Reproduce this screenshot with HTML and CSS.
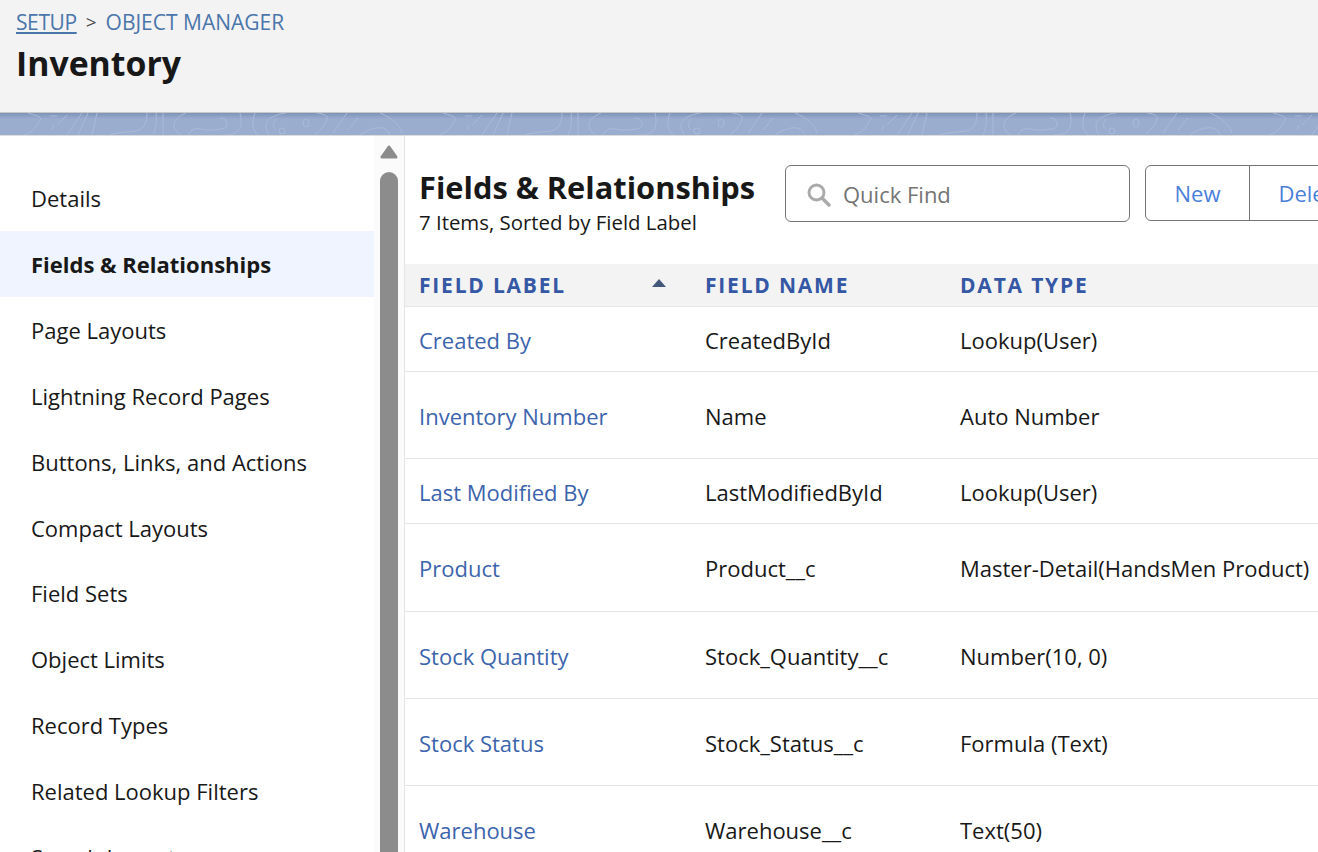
FILE: index.html
```html
<!DOCTYPE html>
<html lang="en">
<head>
    <meta charset="UTF-8">
    <meta name="viewport" content="width=device-width, initial-scale=1.0">
    <title>Inventory | Object Manager</title>
    <link rel="stylesheet" href="styles.css">
</head>
<body>
<header class="page-header">
    <div class="breadcrumb">
        <a class="crumb crumb-current" href="#">SETUP</a>
        <span class="crumb-sep">&gt;</span>
        <a class="crumb" href="#">OBJECT MANAGER</a>
    </div>
    <h1>Inventory</h1>
</header>

<svg class="band" width="100%" height="22" aria-hidden="true">
    <defs>
        <pattern id="contours" width="415" height="22" patternUnits="userSpaceOnUse">
            <g fill="none" stroke="#a9b9d7" stroke-width="1">
                <path d="M28 0c6 2 12 3 13 6-3 3-4 8-8 11-3 3-6 4-9 5"/>
                <path d="M50 3h7M52 17l2-5M57 12L67 2M67 22L82 0M78 22L88 0M92 22L97 0"/>
                <path d="M110 22c8-3 20-3 26-4 8-2 11-8 11-18"/>
                <path d="M153 22c3-6 4-14 3-22M163 22V0"/>
                <path d="M186 0c-8 3-12 8-12 12 0 4 3 8 7 10"/>
                <path d="M188 22c4-7 8-7 12-6 6 1 12 2 20 0 5 0 7-2 7-5s-2-6-7-6"/>
                <path d="M240 0c2 8 1 15-2 18-3 3-8 4-14 4"/>
                <path d="M255 0c-2 4-2 8-2 12 0 4 2 7 5 10"/>
                <path d="M286 0c-10 1-20 6-20 12 0 4 1 7 3 10"/>
                <path d="M276 6c-3 4-4 8 0 10"/>
                <circle cx="282" cy="18" r="3"/>
                <ellipse cx="306" cy="10" rx="3" ry="4"/>
                <path d="M317 0c8 1 11 3 10 6-1 6-7 11-12 16"/>
                <path d="M347 0L333 20M358 5l-10 12"/>
                <path d="M380 0c12 5 20 12 22 20"/>
                <path d="M360 22c7-5 15-8 23-7 3 1 6 3 7 7"/>
            </g>
        </pattern>
    </defs>
    <rect width="100%" height="22" fill="url(#contours)"/>
</svg>

<div class="layout">
    <nav class="sidebar">
        <div class="nav-list">
            <a class="nav-item" href="#">Details</a>
            <a class="nav-item active" href="#">Fields &amp; Relationships</a>
            <a class="nav-item" href="#">Page Layouts</a>
            <a class="nav-item" href="#">Lightning Record Pages</a>
            <a class="nav-item" href="#">Buttons, Links, and Actions</a>
            <a class="nav-item" href="#">Compact Layouts</a>
            <a class="nav-item" href="#">Field Sets</a>
            <a class="nav-item" href="#">Object Limits</a>
            <a class="nav-item" href="#">Record Types</a>
            <a class="nav-item" href="#">Related Lookup Filters</a>
            <a class="nav-item" href="#">Search Layouts</a>
        </div>
        <div class="scrollbar">
            <svg class="scroll-arrow" width="18" height="14" viewBox="0 0 18 14" aria-hidden="true">
                <path d="M9 2L2 12h14z" fill="#8c8c8c" stroke="#8c8c8c" stroke-width="3" stroke-linejoin="round"/>
            </svg>
            <span class="scroll-thumb"></span>
        </div>
    </nav>

    <main class="content">
        <div class="toolbar">
            <div class="toolbar-title">
                <h2>Fields &amp; Relationships</h2>
                <p>7 Items, Sorted by Field Label</p>
            </div>
            <div class="quick-find">
                <svg width="26" height="26" viewBox="0 0 26 26" aria-hidden="true">
                    <circle cx="11.5" cy="11.5" r="7.5" fill="none" stroke="#aaa" stroke-width="3"/>
                    <path d="M17 17l7 7" stroke="#aaa" stroke-width="3.4" stroke-linecap="round"/>
                </svg>
                <input type="text" placeholder="Quick Find">
            </div>
            <div class="btn-group">
                <button type="button">New</button>
                <button type="button">Deleted Fields</button>
            </div>
        </div>

        <table class="fields">
            <thead>
                <tr>
                    <th class="col-label">Field Label<span class="sort-arrow"></span></th>
                    <th class="col-name">Field Name</th>
                    <th>Data Type</th>
                </tr>
            </thead>
            <tbody>
                <tr class="row-short"><td><a href="#">Created By</a></td><td>CreatedById</td><td>Lookup(User)</td></tr>
                <tr class="row-tall"><td><a href="#">Inventory Number</a></td><td>Name</td><td>Auto Number</td></tr>
                <tr class="row-short"><td><a href="#">Last Modified By</a></td><td>LastModifiedById</td><td>Lookup(User)</td></tr>
                <tr class="row-taller"><td><a href="#">Product</a></td><td>Product__c</td><td>Master-Detail(HandsMen Product)</td></tr>
                <tr class="row-tall"><td><a href="#">Stock Quantity</a></td><td>Stock_Quantity__c</td><td>Number(10, 0)</td></tr>
                <tr class="row-tall"><td><a href="#">Stock Status</a></td><td>Stock_Status__c</td><td>Formula (Text)</td></tr>
                <tr class="row-tall"><td><a href="#">Warehouse</a></td><td>Warehouse__c</td><td>Text(50)</td></tr>
            </tbody>
        </table>
    </main>
</div>
</body>
</html>
```

FILE: styles.css
```css
body {
    margin: 0;
    height: 852px;
    overflow: hidden;
    font-family: "Open Sans", "Noto Sans", sans-serif;
    font-size: 22px;
    color: #181818;
    background: #fff;
}
a {
    text-decoration: none;
}

/* header */
.page-header {
    height: 106px;
    padding: 6px 16px 0;
    background: #f3f3f3;
    border-bottom: 1px solid #c9c9c9;
}
.breadcrumb {
    display: flex;
    align-items: center;
    gap: 9px;
    height: 32px;
    font-size: 21px;
}
.crumb {
    color: #4a76ab;
}
.crumb-current {
    text-decoration: underline;
    letter-spacing: -0.4px;
}
.crumb-sep {
    color: #444;
    font-size: 19px;
}
h1 {
    margin: 3px 0 0;
    font-size: 33.8px;
    line-height: 44px;
    font-weight: 700;
}

.band {
    display: block;
    background: linear-gradient(#7f93b8, #9aadcf 6px);
}

/* sidebar */
.layout {
    display: flex;
    height: 716px;
    border-top: 1px solid #dcdcdc;
    overflow: hidden;
}
.sidebar {
    flex: 0 0 404px;
    display: flex;
    border-right: 1px solid #e5e5e5;
}
.nav-list {
    flex: 0 0 374px;
    padding-top: 29.5px;
}
.nav-item {
    display: flex;
    align-items: center;
    height: 65.84px;
    padding-left: 31px;
    color: #181818;
}
.nav-item.active {
    background: #eff4fe;
    font-weight: 700;
}
.scrollbar {
    flex: 0 0 30px;
    box-sizing: border-box;
    padding: 9px 0 0 6px;
    background: #fbfbfb;
}
.scroll-arrow {
    display: block;
}
.scroll-thumb {
    display: block;
    width: 18px;
    height: 800px;
    margin-top: 13px;
    border-radius: 9px 9px 0 0;
    background: #8c8c8c;
}

/* main */
.content {
    flex: 1;
    min-width: 0;
}
.toolbar {
    display: flex;
    align-items: flex-start;
    height: 128px;
    padding: 29px 0 0 14px;
    box-sizing: border-box;
    white-space: nowrap;
}
.toolbar-title {
    flex: 0 0 366px;
}
h2 {
    margin: 0;
    font-size: 30.8px;
    line-height: 44px;
    font-weight: 700;
}
.toolbar-title p {
    margin: 0;
    font-size: 20.4px;
    line-height: 27px;
}
.quick-find {
    flex: 0 0 345px;
    display: flex;
    align-items: center;
    gap: 12px;
    box-sizing: border-box;
    height: 57px;
    padding-left: 19px;
    border: 1px solid #747474;
    border-radius: 6px;
}
.quick-find input {
    flex: 1;
    min-width: 0;
    border: 0;
    outline: 0;
    padding: 0;
    font: inherit;
}
.quick-find input::placeholder {
    color: #747474;
    opacity: 1;
}
.btn-group {
    display: flex;
    flex-shrink: 0;
    height: 56px;
    margin-left: 15px;
    border: 1px solid #747474;
    border-radius: 6px;
    box-sizing: border-box;
}
.btn-group button {
    padding: 0 28.5px;
    border: 0;
    background: none;
    font: inherit;
    color: #4a7fd9;
}
.btn-group button + button {
    border-left: 1px solid #747474;
}

/* table */
.fields {
    width: 913px;
    table-layout: fixed;
    border-collapse: collapse;
    white-space: nowrap;
}
.fields th {
    height: 42px;
    padding: 1px 0 0 14px;
    box-sizing: border-box;
    background: #f3f3f3;
    border-bottom: 1px solid #e5e5e5;
    text-align: left;
    font-size: 21px;
    font-weight: 700;
    letter-spacing: 1.8px;
    text-transform: uppercase;
    color: #3558a5;
}
.col-label {
    width: 286px;
    position: relative;
}
.col-name {
    width: 255px;
}
.sort-arrow {
    position: absolute;
    left: 247px;
    top: 15px;
    width: 0;
    height: 0;
    border-left: 7px solid transparent;
    border-right: 7px solid transparent;
    border-bottom: 8px solid #44597a;
}
.fields td {
    box-sizing: border-box;
    padding: 2px 0 0 14px;
    border-bottom: 1px solid #e5e5e5;
}
.fields td a {
    color: #3c64ad;
}
.row-short td {
    height: 65px;
}
.row-tall td {
    height: 87px;
}
.row-taller td {
    height: 88px;
}
```
